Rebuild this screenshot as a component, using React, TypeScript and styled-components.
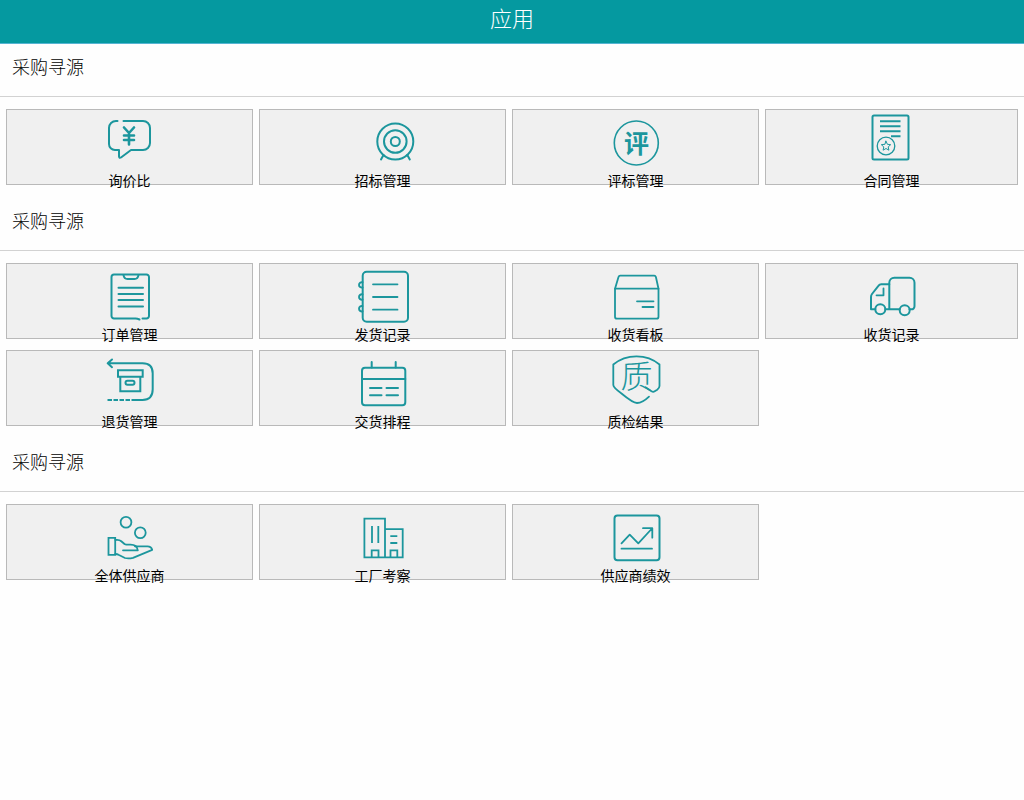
import React from "react";
import styled, { createGlobalStyle } from "styled-components";

const teal = "#1c969d";
const cjk = '"Noto Sans CJK SC", "Noto Sans", sans-serif';

const GlobalStyle = createGlobalStyle`
  *, *::before, *::after { box-sizing: border-box; }
  body { margin: 0; background: #fefefe; color: #000; font-family: ${cjk}; }
`;

const TopBar = styled.header`
  display: flex;
  justify-content: center;
  height: 44px;
  background: #0599a0;
  border-bottom: 1px solid #55b4d2;
`;

const Title = styled.h1`
  margin: 0;
  font-size: 22px;
  line-height: 34px;
  font-weight: 300;
  color: #fff;
`;

const SectionTitle = styled.h2`
  margin: 0;
  height: 53px;
  padding: 0 12px;
  border-bottom: 1px solid #d2d2d2;
  font-size: 18px;
  line-height: 44px;
  font-weight: 300;
  color: #000;
`;

const Grid = styled.div`
  display: grid;
  grid-template-columns: repeat(3, 247fr) 253fr;
  gap: 11px 6px;
  padding: 12px 6px 13px;
`;

const Tile = styled.button`
  display: flex;
  flex-direction: column;
  align-items: center;
  justify-content: flex-start;
  min-width: 0;
  height: 76px;
  padding: 0;
  border: 1px solid #b9b9b9;
  border-radius: 0;
  background: #f0f0f0;
  font-family: inherit;
  color: #000;
  cursor: pointer;
`;

const Icon = styled.svg`
  flex: none;
  display: block;
  width: 65px;
  height: 64px;
  fill: none;
  stroke: ${teal};
  stroke-width: 2;
  stroke-linecap: round;
  stroke-linejoin: round;
`;

const Glyph = styled.text<{ $size: number; $weight: number }>`
  fill: ${teal};
  stroke: none;
  text-anchor: middle;
  font-family: ${cjk};
  font-size: ${(p) => p.$size}px;
  font-weight: ${(p) => p.$weight};
`;

const Label = styled.span`
  font-size: 14px;
  line-height: 12px;
  white-space: nowrap;
`;

const icons = {
  inquiry: (
    <>
      <path d="M20.5 11H19a7 7 0 0 0-7 7v16a6 6 0 0 0 6 6h4v6.5q.2 2 2 1L34 40h12a7 7 0 0 0 7-7V18a7 7 0 0 0-7-7H26.5" />
      <path d="M27 17.5l5 5.5 5-5.500M32 23v11.500M27 25.500h10M27 30h10" strokeWidth="2.6" />
    </>
  ),
  target: (
    <>
      <circle cx="45.3" cy="31.5" r="18" />
      <circle cx="45.3" cy="31.5" r="11.3" />
      <circle cx="45.3" cy="31.5" r="4.5" />
      <path d="M33.5 45l-2.5 4.5M57.3 45l2.500 4.500" />
    </>
  ),
  review: (
    <>
      <circle cx="33.3" cy="33" r="22" strokeWidth="1.6" />
      <Glyph x="33.5" y="42.5" $size={25} $weight={700}>评</Glyph>
    </>
  ),
  contract: (
    <>
      <rect x="13.5" y="5.5" width="36" height="44" rx="1.5" />
      <path d="M21 11.2h20.5M21 16.3h20.500M21 21.300h20.500M32 26.300h9.500" strokeLinecap="butt" />
      <circle cx="27" cy="36" r="8.8" strokeWidth="1.3" />
      <path d="M27 31.2l1.4 3.1 3.3.4-2.5 2.2.7 3.3-2.9-1.7-2.9 1.7.7-3.3-2.5-2.2 3.3-.4z" strokeWidth="1" />
    </>
  ),
  order: (
    <>
      <path d="M42.5 55.5q-2-1-4-1H17a2.500 2.500 0 0 1-2.500-2.500V13a2.500 2.500 0 0 1 2.500-2.500h32.500A2.500 2.500 0 0 1 52 13v39a2.500 2.500 0 0 1-2.500 2.500h-4" />
      <path d="M26.5 11q.5 4 4 4h7q3.5 0 4-4" />
      <path d="M21.5 23.7h24.500M21.500 30h24.500M21.500 36h24.500M21.500 42.500h24.500" />
    </>
  ),
  notebook: (
    <>
      <rect x="12.7" y="7.7" width="45.3" height="50" rx="4" />
      <path d="M23 20.3h24.500M23 33h24.500M23 45.700h24.500" strokeWidth="1.8" />
      <path d="M12.5 18.3a2.700 2.700 0 1 0 0 5.200M12.500 30.400a2.700 2.700 0 1 0 0 5.200M12.500 42.100a2.700 2.700 0 1 0 0 5.200" />
    </>
  ),
  carton: (
    <g strokeWidth="1.8">
      <path d="M12 24.7L15.500 13q.4-1.300 1.700-1.300h34q1.300 0 1.700 1.300l2.600 11.700" />
      <path d="M12 24.7h43.500v28a2 2 0 0 1-2 2H14a2 2 0 0 1-2-2z" />
      <path d="M34 37.3h16.500M39.500 43h11" />
    </g>
  ),
  truck: (
    <>
      <path d="M26.5 45.3h14M50.500 45.300h2a3 3 0 0 0 3-3V18.700a5 5 0 0 0-5-5H35.300a5 5 0 0 0-5 5v26.600" />
      <path d="M30.3 20.3h-8q-1.700 0-2.700 1.400L13 30q-1 1.300-1 3v12.300h4.300" />
      <path d="M24.5 24.5v6.800H17.500" strokeWidth="1.8" />
      <circle cx="21.3" cy="45.3" r="5" />
      <circle cx="45.7" cy="46.3" r="5" />
    </>
  ),
  returns: (
    <>
      <path d="M15 8.5l-4.300 3.800 4.300 3.900M11 12.300h34.500q10.200 0 10.200 10v16q0 10.700-10.200 10.700h-8" />
      <path d="M10.5 49h27" strokeDasharray="4.5 1.5" strokeLinecap="butt" />
      <path d="M21 19.2h24.700v6.500H21zM23.300 25.700v14.600h20V25.700" strokeLinejoin="miter" />
      <rect x="28.5" y="29.8" width="9" height="4" rx="2" />
    </>
  ),
  calendar: (
    <>
      <rect x="12" y="16.7" width="43.3" height="37.6" rx="3" />
      <path d="M12 28h43.300M21.700 11v5.500M45.700 11v5.500" />
      <path d="M20 37h11.500M36.500 37H48M20 44.300h11.500M36.500 44.300H48" />
    </>
  ),
  quality: (
    <g strokeWidth="1.8">
      <path d="M46 45.7Q39.500 52 34 52q-4 0-15.500-9.500Q10.300 36.500 10.300 34V13.500Q20 5.300 33.500 5.300T56.500 13.500V35q0 2-2.300 3.700l-2.500 1.600q-1.500 1-3.200 0l-6-4" />
      <Glyph x="33.5" y="37" $size={32} $weight={300}>质</Glyph>
    </g>
  ),
  suppliers: (
    <g strokeWidth="1.8">
      <circle cx="29" cy="17.3" r="5.4" />
      <circle cx="43.3" cy="27.7" r="5.4" />
      <path d="M11.5 32.8h6.700v17h-6.700z" strokeLinejoin="miter" />
      <path d="M18.3 35q4-.5 6 1.200l3.200 2.800q.8.600 2 .6h4q6.600 0 7.300 5.700H26" />
      <path d="M38 41.3h12.500q3.700 0 4.700 3.500L36 52.800q-4.500 1.200-8 .2l-6-3q-1.700-1-3.700-1" />
    </g>
  ),
  factory: (
    <g strokeWidth="1.8" strokeLinejoin="miter" strokeLinecap="butt">
      <path d="M14.4 13.7H35v38.600H14.400zM35 24.200h17.700v28.100H35" />
      <path d="M22 21v17M28.300 21v17M40.300 31.200h7M40.300 38h7" />
      <path d="M21.7 52v-6.700h6.800V52M40.500 52v-6.700h6.800V52" />
    </g>
  ),
  performance: (
    <>
      <rect x="11.5" y="10.5" width="45" height="44.8" rx="3" />
      <path d="M18.5 43.7h30.500M18.500 38.300l8.200-8.600 8.600 8.700L49 23.500M40 23.200h9.300v9.500" strokeWidth="1.8" />
    </>
  ),
};

type Item = { label: string; icon: keyof typeof icons };

const sections: { title: string; items: Item[] }[] = [
  {
    title: "采购寻源",
    items: [
      { label: "询价比", icon: "inquiry" },
      { label: "招标管理", icon: "target" },
      { label: "评标管理", icon: "review" },
      { label: "合同管理", icon: "contract" },
    ],
  },
  {
    title: "采购寻源",
    items: [
      { label: "订单管理", icon: "order" },
      { label: "发货记录", icon: "notebook" },
      { label: "收货看板", icon: "carton" },
      { label: "收货记录", icon: "truck" },
      { label: "退货管理", icon: "returns" },
      { label: "交货排程", icon: "calendar" },
      { label: "质检结果", icon: "quality" },
    ],
  },
  {
    title: "采购寻源",
    items: [
      { label: "全体供应商", icon: "suppliers" },
      { label: "工厂考察", icon: "factory" },
      { label: "供应商绩效", icon: "performance" },
    ],
  },
];

export default function App() {
  return (
    <>
      <GlobalStyle />
      <TopBar>
        <Title>应用</Title>
      </TopBar>
      <main lang="zh-CN">
        {sections.map((section, i) => (
          <section key={i}>
            <SectionTitle>{section.title}</SectionTitle>
            <Grid>
              {section.items.map((item) => (
                <Tile key={item.label} type="button">
                  <Icon viewBox="0 0 65 64" aria-hidden="true">
                    {icons[item.icon]}
                  </Icon>
                  <Label>{item.label}</Label>
                </Tile>
              ))}
            </Grid>
          </section>
        ))}
      </main>
    </>
  );
}
